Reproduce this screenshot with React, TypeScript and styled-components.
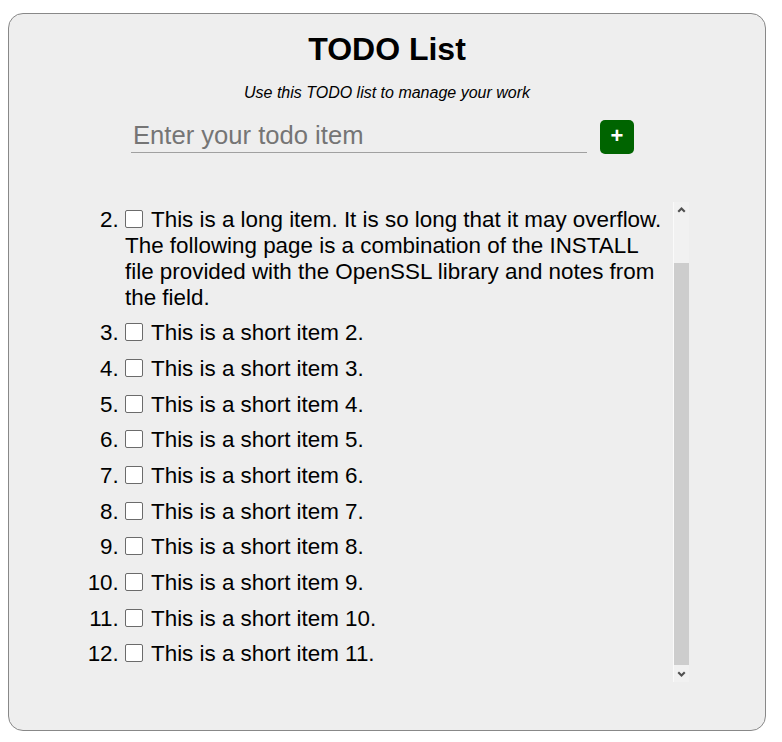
import React, { useLayoutEffect, useRef } from 'react';
import styled, { createGlobalStyle } from 'styled-components';

const GlobalStyle = createGlobalStyle`
  body {
    margin: 8px;
    background: #fff;
    color: #000;
    font-family: "Liberation Sans", Arial, sans-serif;
  }
`;

const Panel = styled.div`
  box-sizing: border-box;
  width: 758px;
  margin-top: 5px;
  padding: 17px 0 48px;
  border: 1px solid #888;
  border-radius: 15px;
  background: #eee;
  display: flex;
  flex-direction: column;
  align-items: center;
`;

const Title = styled.h1`
  margin: 0;
  font-size: 32px;
  font-weight: bold;
  line-height: normal;
`;

const Subtitle = styled.p`
  margin: 16px 0 0;
  font-size: 16px;
  font-style: italic;
  line-height: normal;
`;

const InputRow = styled.div`
  display: flex;
  align-items: flex-start;
  gap: 13px;
  margin: 18px 9px 0 0;
`;

const TodoInput = styled.input`
  box-sizing: border-box;
  width: 456px;
  height: 33px;
  padding: 0 2px 2px;
  border: none;
  border-bottom: 1px solid #a0a0a0;
  background: transparent;
  font-family: inherit;
  font-size: 25.6px;
  color: #000;
  outline: none;
  &::placeholder {
    color: #757575;
  }
`;

const AddButton = styled.button`
  width: 34px;
  height: 34px;
  padding: 0 0 3px;
  border: none;
  border-radius: 5px;
  background: #006400;
  color: #fff;
  font-family: inherit;
  font-size: 22px;
  font-weight: bold;
  display: flex;
  align-items: center;
  justify-content: center;
`;

const ScrollArea = styled.div`
  margin-top: 48px;
  width: 604px;
  height: 480px;
  display: flex;
`;

const Viewport = styled.div`
  flex: 1;
  min-width: 0;
  overflow-y: auto;
  scrollbar-width: none;
  &::-webkit-scrollbar {
    display: none;
  }
`;

const ScrollTrack = styled.div`
  width: 15px;
  border-left: 1px solid #fafafa;
  background: #f1f1f1;
  display: flex;
  flex-direction: column;
`;

const ArrowButton = styled.div`
  height: 15px;
  flex: none;
  display: flex;
  align-items: center;
  justify-content: center;
  color: #505050;
`;

const ThumbRail = styled.div`
  flex: 1;
  display: flex;
  flex-direction: column;
`;

const Thumb = styled.div`
  margin-top: 46px;
  height: 402px;
  background: #cdcdcd;
`;

const List = styled.ol`
  margin: 10px 0;
  padding: 0 7px 0 40px;
  font-size: 22.4px;
`;

const Item = styled.li`
  padding: 4.85px 0;
  line-height: normal;
`;

const Check = styled.input`
  appearance: none;
  box-sizing: border-box;
  width: 18px;
  height: 18px;
  margin: 0 8px 0 0;
  border: 1.8px solid #6b6b6b;
  border-radius: 2px;
  background: #fff;
  vertical-align: middle;
  position: relative;
  top: -2px;
`;

const Chevron = ({ down }: { down?: boolean }) => (
  <svg width="9" height="7" viewBox="0 0 9 7" style={down ? { transform: 'rotate(180deg)' } : undefined}>
    <path d="M0.5 5 L4.5 1 L8.5 5 L7 6.5 L4.5 4 L2 6.5 Z" fill="currentColor" />
  </svg>
);

const items = [
  'This is a short item 1.',
  'This is a long item. It is so long that it may overflow. The following page is a combination of the INSTALL file provided with the OpenSSL library and notes from the field.',
  ...Array.from({ length: 10 }, (_, i) => `This is a short item ${i + 2}.`),
];

export default function App() {
  const ref = useRef<HTMLDivElement>(null);
  useLayoutEffect(() => {
    if (ref.current) ref.current.scrollTop = ref.current.scrollHeight;
  }, []);
  return (
    <>
      <GlobalStyle />
      <Panel>
        <Title>TODO List</Title>
        <Subtitle>Use this TODO list to manage your work</Subtitle>
        <InputRow>
          <TodoInput placeholder="Enter your todo item" />
          <AddButton>+</AddButton>
        </InputRow>
        <ScrollArea>
          <Viewport ref={ref}>
            <List>
              {items.map((t, i) => (
                <Item key={i}>
                  <Check type="checkbox" />
                  {t}
                </Item>
              ))}
            </List>
          </Viewport>
          <ScrollTrack>
            <ArrowButton>
              <Chevron />
            </ArrowButton>
            <ThumbRail>
              <Thumb />
            </ThumbRail>
            <ArrowButton>
              <Chevron down />
            </ArrowButton>
          </ScrollTrack>
        </ScrollArea>
      </Panel>
    </>
  );
}
